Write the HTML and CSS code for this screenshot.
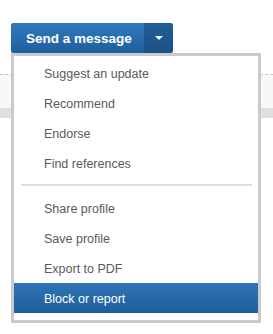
FILE: index.html
```html
<!DOCTYPE html>
<html lang="en">
<head>
    <meta charset="UTF-8">
    <meta name="viewport" content="width=device-width, initial-scale=1.0">
    <link rel="stylesheet" href="styles.css">
</head>
<body>
    <div class="actions">
        <div class="split-button">
            <button type="button" class="send-btn">Send a message</button>
            <button type="button" class="toggle-btn"><span class="caret"></span></button>
        </div>
        <ul class="menu">
            <li>Suggest an update</li>
            <li>Recommend</li>
            <li>Endorse</li>
            <li>Find references</li>
            <li class="divider"></li>
            <li>Share profile</li>
            <li>Save profile</li>
            <li>Export to PDF</li>
            <li class="active">Block or report</li>
        </ul>
    </div>
    <div class="backdrop">
        <div class="strip"></div>
        <div class="band"></div>
    </div>
</body>
</html>
```

FILE: styles.css
```css
html, body {
    min-height: 100vh;
}
body {
    font-family: Arial, "Liberation Sans", sans-serif;
    margin: 0;
    padding: 0;
    background-color: #fff;
}

.actions {
    position: relative;
    padding: 23px 0 0 11px;
    height: 30px;
}

.split-button {
    position: relative;
    z-index: 2;
    display: flex;
    height: 30px;
}
.split-button button {
    border: 0;
    margin: 0;
    height: 30px;
    color: #fff;
    cursor: pointer;
    font-family: inherit;
}
.send-btn {
    width: 133px;
    padding: 0 0 0 15px;
    text-align: left;
    font-size: 13.5px;
    font-weight: bold;
    border-radius: 2px 0 0 2px;
    background: linear-gradient(#307abb, #1f5f9d);
}
.toggle-btn {
    width: 29px;
    padding: 0;
    border-radius: 0 2px 2px 0;
    background: linear-gradient(#225e98, #1a5088);
    display: flex;
    align-items: center;
    justify-content: center;
}
.caret {
    width: 0;
    height: 0;
    border-left: 4px solid transparent;
    border-right: 4px solid transparent;
    border-top: 4px solid #fff;
}

.menu {
    position: absolute;
    z-index: 1;
    left: 11px;
    top: 53px;
    width: 250px;
    box-sizing: border-box;
    margin: 0;
    padding: 2px 0 7px;
    list-style: none;
    background-color: #fff;
    border: 3px solid #cacaca;
}
.menu li {
    height: 29px;
    padding: 1px 0 0 30px;
    line-height: 30px;
    font-size: 12.5px;
    color: #5a5a5a;
}
.menu li.divider {
    height: 2px;
    padding: 0;
    margin: 6px 6px 7px 7px;
    background-color: #dedede;
}
.menu li.active {
    color: #fff;
    background: linear-gradient(#2f75b6, #1e5d9b);
}

.backdrop {
    margin-top: 21px;
}
.strip {
    height: 33px;
    border-top: 1px dashed #c8c8c8;
    background-color: #f8f8f8;
}
.band {
    height: 10px;
    background-color: #dfdfdf;
}
```
